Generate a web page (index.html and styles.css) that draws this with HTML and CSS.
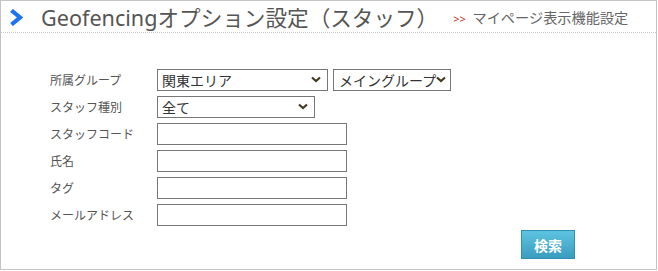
FILE: index.html
```html
<!DOCTYPE html>
<html lang="ja">
<head>
    <meta charset="UTF-8">
    <title>Geofencingオプション設定（スタッフ）</title>
    <link rel="stylesheet" href="styles.css">
</head>
<body>
<div class="page">
    <div class="title-bar">
        <svg class="chev" width="14" height="17" viewBox="0 0 14 17">
            <path d="M2.5 1.5 L11 8.5 L2.5 15.5" fill="none" stroke="#1a73f0" stroke-width="4.2" stroke-linejoin="miter"/>
        </svg>
        <h1>Geofencingオプション設定（スタッフ）</h1>
        <span class="crumb"><span class="arrows">&gt;&gt;</span> マイページ表示機能設定</span>
    </div>

    <div class="form">
        <div class="row">
            <label>所属グループ</label>
            <select class="sel sel-area"><option>関東エリア</option></select>
            <select class="sel sel-group"><option>メイングループ</option></select>
        </div>
        <div class="row">
            <label>スタッフ種別</label>
            <select class="sel sel-kind"><option>全て</option></select>
        </div>
        <div class="row">
            <label>スタッフコード</label>
            <input type="text">
        </div>
        <div class="row">
            <label>氏名</label>
            <input type="text">
        </div>
        <div class="row">
            <label>タグ</label>
            <input type="text">
        </div>
        <div class="row">
            <label>メールアドレス</label>
            <input type="text">
        </div>
        <div class="actions">
            <button class="btn-search">検索</button>
        </div>
    </div>
</div>
</body>
</html>
```
FILE: styles.css
```css
html, body {
    margin: 0;
    padding: 0;
}

body {
    font-family: "Noto Sans", "Noto Sans CJK JP", sans-serif;
    color: #555;
}

.page {
    width: 655px;
    height: 268px;
    border: 1px solid #c4c4c4;
}

.title-bar {
    display: flex;
    align-items: center;
    height: 31px;
    border-bottom: 1px dotted #c8c8c8;
    padding-left: 8px;
}

.chev {
    margin-top: 1px;
}

h1 {
    margin: 0 0 0 18px;
    font-size: 21.6px;
    font-weight: normal;
    color: #555;
}

.crumb {
    margin-left: 15px;
    font-size: 14.2px;
    color: #666;
}

.arrows {
    color: #c0302f;
    font-size: 11px;
    margin-right: 3px;
}

.form {
    padding: 33px 0 0 49px;
}

.row {
    display: flex;
    align-items: center;
    height: 27px;
}

.row label {
    width: 107px;
    font-size: 12px;
    color: #555;
}

.sel {
    -webkit-appearance: none;
    appearance: none;
    height: 22px;
    margin: 0;
    padding: 0 16px 0 4px;
    border: 1px solid #777;
    border-radius: 0;
    font-family: "Noto Sans CJK JP", sans-serif;
    font-size: 14px;
    color: #333;
    background: #fff url("data:image/svg+xml;utf8,<svg xmlns='http://www.w3.org/2000/svg' width='10' height='7' viewBox='0 0 10 7'><path d='M1 1.5 L5 5 L9 1.5' fill='none' stroke='%23443a22' stroke-width='2.2'/></svg>") no-repeat right 6px center;
}

.sel-area {
    width: 171px;
}

.sel-group {
    width: 118px;
    margin-left: 5px;
    padding-left: 5px;
    padding-right: 12px;
    background-position: right 4px center;
}

.sel-kind {
    width: 158px;
}

input[type="text"] {
    width: 190px;
    height: 22px;
    box-sizing: border-box;
    margin: 0;
    border: 1px solid #777;
    padding: 0 3px;
}

.actions {
    display: flex;
    justify-content: flex-end;
    width: 525px;
    margin-top: 2px;
}

.btn-search {
    width: 54px;
    height: 29px;
    border: 1px solid #2f8fb0;
    border-radius: 0;
    background: linear-gradient(#5ec3e0, #3a9cc0);
    color: #fff;
    font-family: "Noto Sans CJK JP", sans-serif;
    font-size: 14px;
    font-weight: bold;
    padding: 0;
}
```
